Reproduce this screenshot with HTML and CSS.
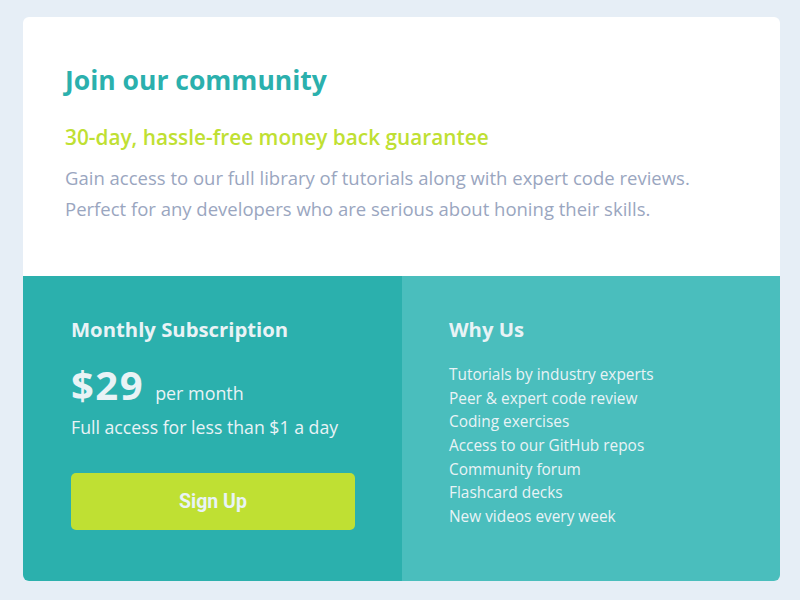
FILE: index.html
```html
<!DOCTYPE html>
<html lang="en">
<head>
<meta charset="utf-8">
<title>Single price grid</title>
<link rel="stylesheet" href="styles.css">
</head>
<body>
<main class="card">
  <section class="intro">
    <h1 class="title">Join our community</h1>
    <h2 class="guarantee">30-day, hassle-free money back guarantee</h2>
    <p class="desc">Gain access to our full library of tutorials along with expert code reviews.<br>Perfect for any developers who are serious about honing their skills.</p>
  </section>
  <div class="bottom">
    <section class="subscription">
      <h3 class="sub-title">Monthly Subscription</h3>
      <div class="price"><span class="amount">$29</span><span class="period">per month</span></div>
      <p class="access">Full access for less than $1 a day</p>
      <button class="signup">Sign Up</button>
    </section>
    <section class="why">
      <h3 class="why-title">Why Us</h3>
      <ul class="why-list">
        <li>Tutorials by industry experts</li>
        <li>Peer &amp; expert code review</li>
        <li>Coding exercises</li>
        <li>Access to our GitHub repos</li>
        <li>Community forum</li>
        <li>Flashcard decks</li>
        <li>New videos every week</li>
      </ul>
    </section>
  </div>
</main>
</body>
</html>
```
FILE: styles.css
```css
* { box-sizing: border-box; }
html, body { margin: 0; padding: 0; }
body {
  background: #e6eef6;
  font-family: "Open Sans", "Noto Sans", sans-serif;
  padding: 17px 20px 19px 23px;
}
.card {
  width: 757px;
  height: 564px;
  background: #fff;
  border-radius: 6px;
  overflow: hidden;
  display: flex;
  flex-direction: column;
}
.intro {
  height: 259px;
  padding: 47px 42px 0 42px;
}
.title {
  margin: 0;
  color: #2bb0ad;
  font-size: 26.5px;
  font-weight: 700;
  line-height: 32px;
}
.guarantee {
  margin: 28px 0 0;
  color: #bfe033;
  font-size: 20.8px;
  font-weight: 600;
  line-height: 26px;
}
.desc {
  margin: 12px 0 0;
  color: #9aa6bf;
  font-size: 18.5px;
  line-height: 31px;
}
.bottom {
  flex: 1;
  display: flex;
}
.subscription {
  width: 379px;
  background: #2bb0ad;
  color: #e9f3f6;
  padding: 40px 48px 0 48px;
}
.why {
  flex: 1;
  background: #4abebd;
  color: #e9f3f6;
  padding: 40px 47px 0 47px;
}
.sub-title, .why-title {
  margin: 0;
  font-size: 20.3px;
  font-weight: 700;
  line-height: 26px;
}
.price {
  margin-top: 20px;
  display: flex;
  align-items: baseline;
  gap: 11px;
  height: 46px;
}
.amount {
  font-size: 40px;
  font-weight: 700;
  line-height: 46px;
  letter-spacing: 1.5px;
}
.period {
  font-size: 17.9px;
}
.access {
  margin: 7px 0 0;
  font-size: 17.7px;
  line-height: 24px;
}
.signup {
  display: block;
  margin-top: 34px;
  width: 284px;
  height: 57px;
  border: 0;
  border-radius: 5px;
  background: #bfe033;
  color: #e9f3f6;
  font-family: Roboto, "Liberation Sans", sans-serif;
  font-size: 19.5px;
  font-weight: 700;
  cursor: pointer;
}
.why-list {
  list-style: none;
  margin: 21px 0 0;
  padding: 0;
  font-size: 15.4px;
  line-height: 23.65px;
}
```
